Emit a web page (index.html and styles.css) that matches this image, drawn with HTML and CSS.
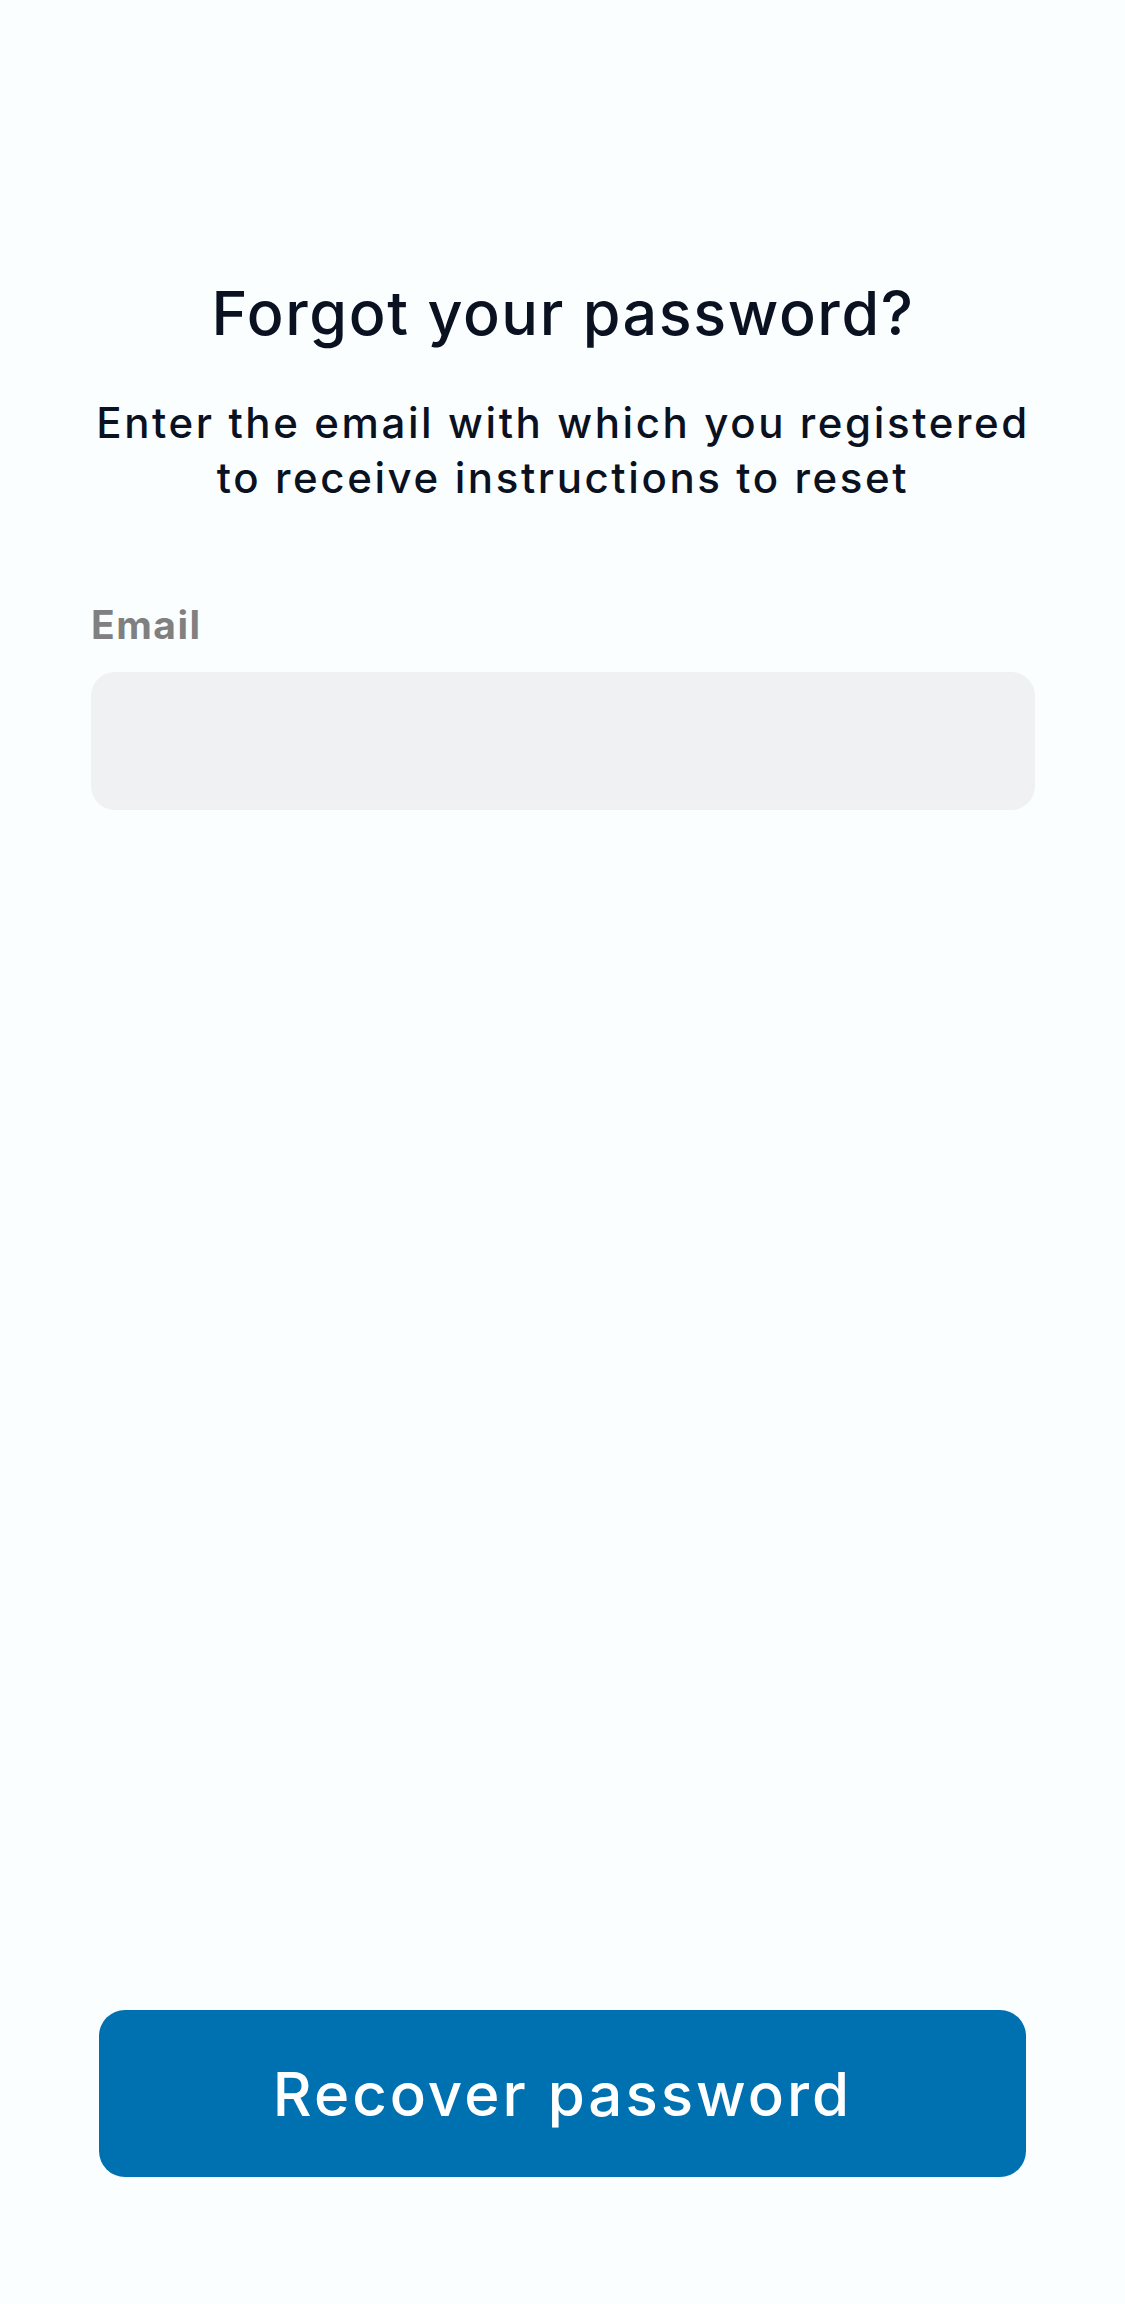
FILE: index.html
```html
<!DOCTYPE html>
<html lang="en">
<head>
<meta charset="utf-8">
<title>Forgot your password?</title>
<link rel="stylesheet" href="styles.css">
</head>
<body>
<main class="screen">
  <section class="intro">
    <h1 class="title">Forgot your password?</h1>
    <p class="subtitle">Enter the email with which you registered<br>to receive instructions to reset</p>
  </section>
  <form class="form">
    <label class="label" for="email">Email</label>
    <input class="input" id="email" type="email">
  </form>
  <div class="actions">
    <button class="button" type="button">Recover password</button>
  </div>
</main>
</body>
</html>
```
FILE: styles.css
```css
html, body {
  margin: 0;
  padding: 0;
  background: #fbfeff;
}
body {
  font-family: Inter, "Noto Sans", sans-serif;
  color: #0a1120;
}
.screen {
  min-height: 2304px;
  box-sizing: border-box;
  display: flex;
  flex-direction: column;
  padding: 277px 90px 127px 91px;
}
.intro {
  text-align: center;
}
.title {
  margin: 0;
  font-size: 61px;
  line-height: 72px;
  font-weight: 500;
  letter-spacing: 1.6px;
}
.subtitle {
  margin: 46px 0 0;
  font-size: 42px;
  line-height: 55px;
  font-weight: 500;
  letter-spacing: 2.6px;
}
.form {
  display: flex;
  flex-direction: column;
  margin-top: 97px;
}
.label {
  font-size: 39px;
  line-height: 46px;
  font-weight: 700;
  color: #808080;
  letter-spacing: 1.5px;
}
.input {
  margin-top: 24px;
  height: 138px;
  border: none;
  border-radius: 24px;
  background: #eff1f2;
  box-sizing: border-box;
  outline: none;
}
.actions {
  margin-top: auto;
  padding: 0 9px 0 8px;
}
.button {
  width: 100%;
  height: 167px;
  border: none;
  border-radius: 26px;
  background: #0071b0;
  color: #ffffff;
  font-family: Inter, "Noto Sans", sans-serif;
  font-size: 60px;
  font-weight: 500;
  letter-spacing: 3px;
}
```
